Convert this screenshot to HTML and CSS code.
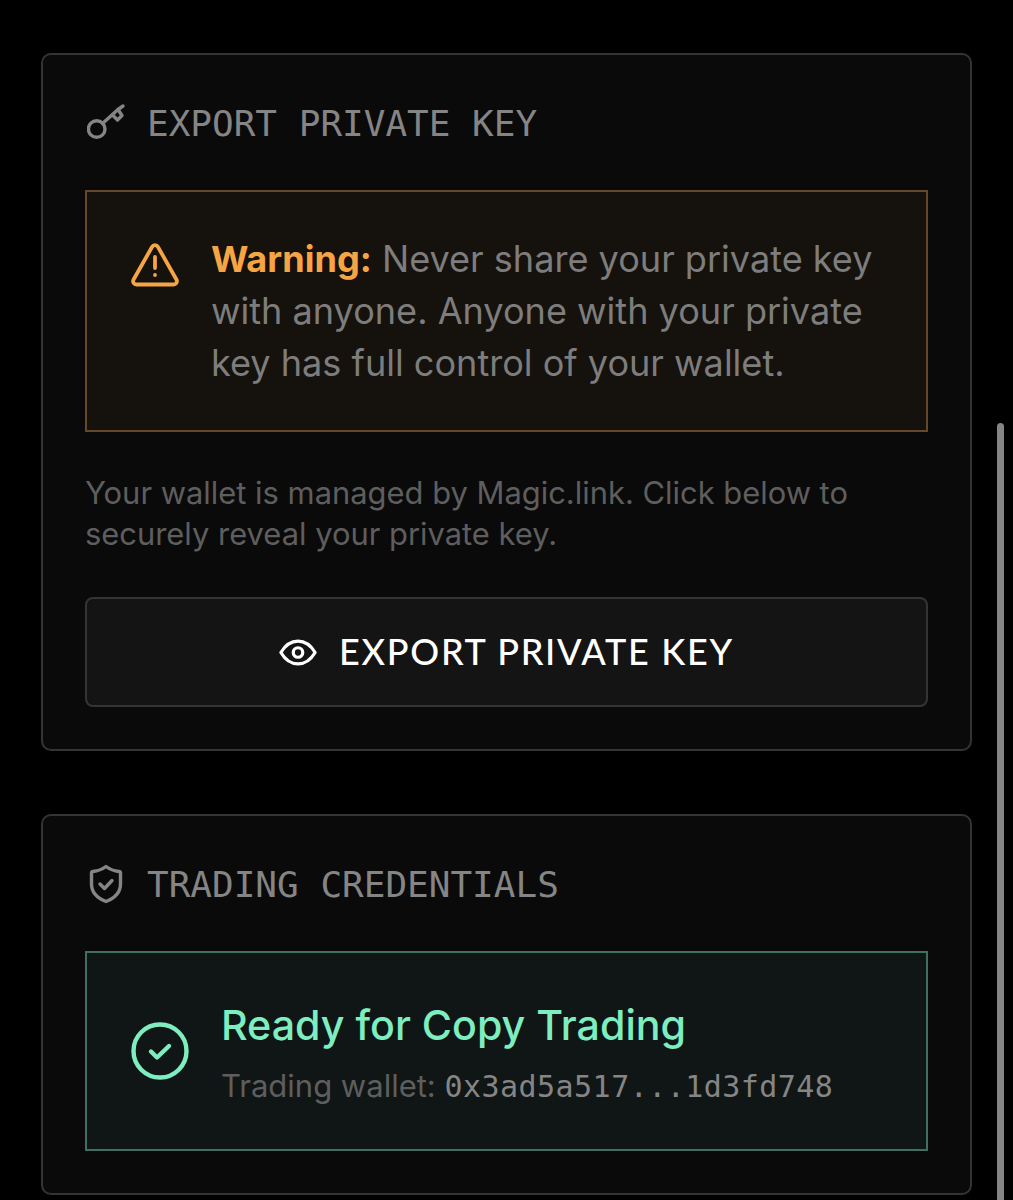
FILE: index.html
```html
<!DOCTYPE html>
<html lang="en">
<head>
    <meta charset="UTF-8">
    <meta name="viewport" content="width=device-width, initial-scale=1.0">
    <title>Wallet Settings</title>
    <link rel="stylesheet" href="styles.css">
</head>
<body>
    <div class="page">
        <section class="card">
            <h2 class="card-title">
                <svg class="title-icon" viewBox="0 0 40 40" fill="none" stroke="currentColor" stroke-width="3.4" stroke-linecap="round" stroke-linejoin="round">
                    <circle cx="9.7" cy="26" r="8.3"/>
                    <path d="M15.5 20.5 L31 6.5 L36 3"/>
                    <path d="M25.5 12 L30.5 17 L35 12.5 L31 6.5"/>
                </svg>
                <span>EXPORT PRIVATE KEY</span>
            </h2>
            <div class="notice notice-warning">
                <svg class="warning-icon" viewBox="0 0 48 44" fill="none" stroke="currentColor" stroke-width="3.8" stroke-linecap="round" stroke-linejoin="round">
                    <path d="M21 4 L2.6 36.5 C1.2 39 3 41.5 5.6 41.5 L42.4 41.5 C45 41.5 46.8 39 45.4 36.5 L27 4 C25.6 1.5 22.4 1.5 21 4 Z"/>
                    <path d="M24 14 L24 25"/>
                    <path d="M24 32 L24 32.1"/>
                </svg>
                <p class="warning-text"><strong>Warning:</strong> Never share your private key with anyone. Anyone with your private key has full control of your wallet.</p>
            </div>
            <p class="hint">Your wallet is managed by Magic.link. Click below to securely reveal your private key.</p>
            <button class="export-btn" type="button">
                <svg class="eye-icon" viewBox="0 0 40 28" fill="none" stroke="currentColor" stroke-width="3.4" stroke-linecap="round" stroke-linejoin="round">
                    <path d="M2 14 C7 5.5 13 2 20 2 C27 2 33 5.5 38 14 C33 22.5 27 26 20 26 C13 26 7 22.5 2 14 Z"/>
                    <circle cx="20" cy="14" r="5"/>
                </svg>
                <span>EXPORT PRIVATE KEY</span>
            </button>
        </section>

        <section class="card">
            <h2 class="card-title">
                <svg class="title-icon" viewBox="0 0 40 40" fill="none" stroke="currentColor" stroke-width="3.4" stroke-linecap="round" stroke-linejoin="round">
                    <path d="M19 2.5 C23 5.5 27 7 32 7.5 C33 7.6 33.5 8.2 33.5 9 L33.5 20 C33.5 28 28 34 19 37.5 C10 34 4.5 28 4.5 20 L4.5 9 C4.5 8.2 5 7.6 6 7.5 C11 7 15 5.5 19 2.5 Z"/>
                    <path d="M13 20 L17.5 24.5 L25 16.5"/>
                </svg>
                <span>TRADING CREDENTIALS</span>
            </h2>
            <div class="notice notice-success">
                <svg class="check-icon" viewBox="0 0 58 58" fill="none" stroke="currentColor" stroke-width="4.4" stroke-linecap="round" stroke-linejoin="round">
                    <circle cx="29" cy="29" r="26.5"/>
                    <path d="M20 29.5 L26 35.5 L38 24"/>
                </svg>
                <div>
                    <div class="ready-title">Ready for Copy Trading</div>
                    <div class="ready-sub">Trading wallet: <span class="address">0x3ad5a517...1d3fd748</span></div>
                </div>
            </div>
        </section>
    </div>
    <div class="scroll-thumb"></div>
</body>
</html>
```

FILE: styles.css
```css
html, body {
    height: 100%;
}
body {
    margin: 0;
    background-color: #000000;
    font-family: Inter, 'Noto Sans', sans-serif;
    overflow: hidden;
}
.page {
    display: flex;
    flex-direction: column;
    gap: 63px;
    width: 931px;
    margin-left: 41px;
    padding-top: 53px;
}
.card {
    background: #0a0a0a;
    border: 2px solid #343434;
    border-radius: 10px;
    padding: 43px 42px 42px;
}
.card-title {
    display: flex;
    align-items: center;
    gap: 20px;
    height: 50px;
    margin: 0 0 42px;
    color: #858585;
    font-family: 'DejaVu Sans Mono', monospace;
    font-size: 36px;
    font-weight: 400;
}
.title-icon {
    width: 40px;
    height: 40px;
    margin-left: 2px;
}
.notice {
    display: flex;
    box-sizing: border-box;
}
.notice-warning {
    gap: 32px;
    height: 242px;
    padding: 41px 44px;
    background: #15110c;
    border: 2px solid #644829;
}
.warning-icon {
    flex: none;
    width: 48px;
    height: 44px;
    margin-top: 10px;
    color: #f6a544;
}
.warning-text {
    margin: 0;
    color: #7d7d7d;
    font-size: 36.1px;
    line-height: 52px;
}
.warning-text strong {
    color: #f6a544;
    font-weight: 700;
}
.hint {
    margin: 40px 0 43px;
    color: #5e5e5e;
    font-size: 30.9px;
    line-height: 41px;
}
.export-btn {
    display: flex;
    align-items: center;
    justify-content: center;
    gap: 22px;
    width: 100%;
    height: 110px;
    padding: 0;
    background: #141414;
    border: 2px solid #343434;
    border-radius: 8px;
    color: #ffffff;
    font-family: Lato, sans-serif;
    font-size: 36px;
    font-weight: 500;
    letter-spacing: 1.7px;
}
.export-btn span {
    margin-top: -2px;
}
.eye-icon {
    width: 38px;
    height: 27px;
}
.notice-success {
    align-items: flex-start;
    gap: 32px;
    height: 200px;
    padding: 47px 44px 0;
    background: #101615;
    border: 2px solid #3f6f5e;
}
.check-icon {
    flex: none;
    width: 58px;
    height: 58px;
    margin-top: 22px;
    color: #7eeec0;
}
.ready-title {
    color: #7eeec0;
    font-size: 41.2px;
    font-weight: 500;
    line-height: 50px;
}
.ready-sub {
    margin-top: 16px;
    color: #5e5e5e;
    font-size: 31px;
    line-height: 40px;
}
.address {
    color: #858585;
    font-family: 'DejaVu Sans Mono', monospace;
    font-size: 30px;
    letter-spacing: 0.45px;
}
.scroll-thumb {
    position: absolute;
    top: 423px;
    bottom: 0;
    left: 997px;
    width: 7px;
    border-radius: 4px 4px 0 0;
    background: #858585;
}
```
